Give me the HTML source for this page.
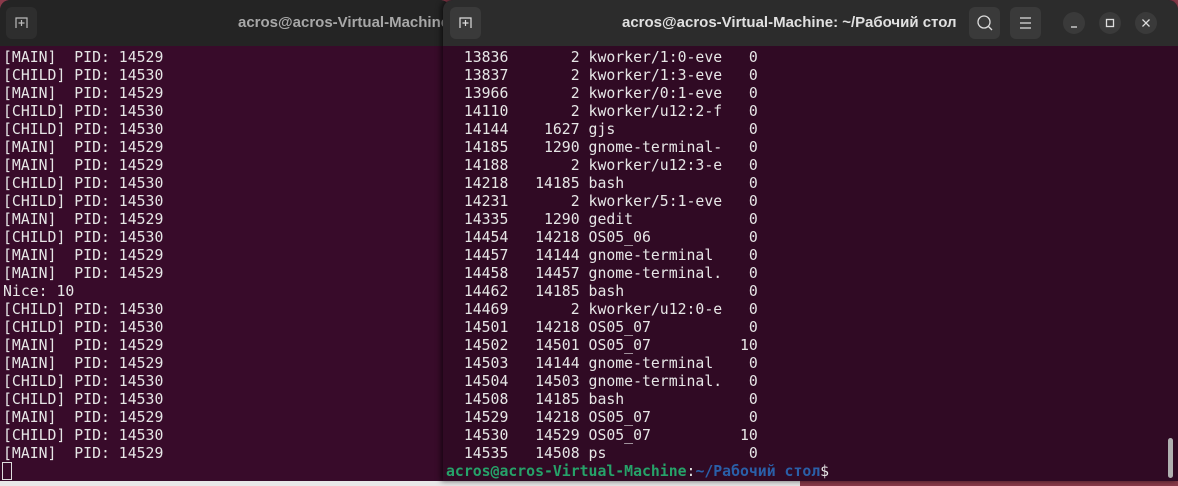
<!DOCTYPE html>
<html><head><meta charset="utf-8"><style>
*{margin:0;padding:0;box-sizing:border-box}
body{width:1178px;height:486px;overflow:hidden;background:#8a3a4a;position:relative;font-family:"DejaVu Sans Mono","Liberation Mono",monospace}
.gray{position:absolute;left:0;top:481px;width:800px;height:5px;background:#e8e8e8}
.win{position:absolute;top:0;height:481px;background:#380b2a;overflow:hidden}
.hdr{position:absolute;left:0;top:0;right:0;height:46px;font-family:"Liberation Sans","DejaVu Sans",sans-serif;font-weight:bold;font-size:15px;color:#cfcfcf}
.btn{position:absolute;top:7px;width:31px;height:32px;border-radius:6px;background:#3a3a3a}
pre{position:absolute;font-size:14.8px;line-height:18px;color:#e6e6e6;font-family:"DejaVu Sans Mono",monospace}
.circ{position:absolute;top:12px;width:22px;height:22px;border-radius:50%;background:#3a3a3a}
</style></head><body>
<div class="gray"></div>
<div class="win" style="left:0;width:450px;border-radius:10px 10px 0 0">
 <div class="hdr" style="background:#242424">
  <div class="btn" style="left:6px;background:#2e2e2e"><svg width="31" height="32"><path d="M10 21V11h11v10M15.5 13v6M12.5 16h6" stroke="#bbb" fill="none" stroke-width="1.2"/></svg></div>
  <div style="position:absolute;left:238px;top:14px;color:#a8a8a8">acros@acros-Virtual-Machine</div>
 </div>
 <pre style="left:3px;top:49px">[MAIN]  PID: 14529
[CHILD] PID: 14530
[MAIN]  PID: 14529
[CHILD] PID: 14530
[CHILD] PID: 14530
[MAIN]  PID: 14529
[MAIN]  PID: 14529
[CHILD] PID: 14530
[CHILD] PID: 14530
[MAIN]  PID: 14529
[CHILD] PID: 14530
[MAIN]  PID: 14529
[MAIN]  PID: 14529
Nice: 10
[CHILD] PID: 14530
[CHILD] PID: 14530
[MAIN]  PID: 14529
[MAIN]  PID: 14529
[CHILD] PID: 14530
[CHILD] PID: 14530
[MAIN]  PID: 14529
[CHILD] PID: 14530
[MAIN]  PID: 14529</pre>
 <div style="position:absolute;left:2px;top:462px;width:10px;height:18px;border:1px solid #ddd"></div>
</div>
<div class="win" style="left:443px;width:735px;border-radius:10px 10px 0 0;box-shadow:-2px 0 6px rgba(0,0,0,.6);background:#300a24">
 <div class="hdr" style="background:#2c2c2c">
  <div class="btn" style="left:7px"><svg width="31" height="32"><path d="M10 21V11h11v10M15.5 13v6M12.5 16h6" stroke="#ddd" fill="none" stroke-width="1.2"/></svg></div>
  <div style="position:absolute;left:179px;top:14px;color:#e0e0e0">acros@acros-Virtual-Machine: ~/Рабочий стол</div>
  <div class="btn" style="left:526px"><svg width="31" height="32"><circle cx="15" cy="15" r="6" stroke="#ddd" fill="none" stroke-width="1.3"/><path d="M19.5 19.5l3.5 3.5" stroke="#ddd" stroke-width="1.3"/></svg></div>
  <div class="btn" style="left:567px"><svg width="31" height="32"><path d="M10 11h11M10 16h11M10 21h11" stroke="#ddd" stroke-width="1.2"/></svg></div>
  <div class="circ" style="left:620px"><svg width="22" height="22"><path d="M8 15h6" stroke="#ddd" stroke-width="1.3"/></svg></div>
  <div class="circ" style="left:656px"><svg width="22" height="22"><rect x="7.5" y="7.5" width="7" height="7" stroke="#ddd" fill="none" stroke-width="1.3"/></svg></div>
  <div class="circ" style="left:692px"><svg width="22" height="22"><path d="M7.5 7.5l7 7M14.5 7.5l-7 7" stroke="#ddd" stroke-width="1.3"/></svg></div>
 </div>
 <pre style="left:3px;top:49px">  13836       2 kworker/1:0-eve   0
  13837       2 kworker/1:3-eve   0
  13966       2 kworker/0:1-eve   0
  14110       2 kworker/u12:2-f   0
  14144    1627 gjs               0
  14185    1290 gnome-terminal-   0
  14188       2 kworker/u12:3-e   0
  14218   14185 bash              0
  14231       2 kworker/5:1-eve   0
  14335    1290 gedit             0
  14454   14218 OS05_06           0
  14457   14144 gnome-terminal    0
  14458   14457 gnome-terminal.   0
  14462   14185 bash              0
  14469       2 kworker/u12:0-e   0
  14501   14218 OS05_07           0
  14502   14501 OS05_07          10
  14503   14144 gnome-terminal    0
  14504   14503 gnome-terminal.   0
  14508   14185 bash              0
  14529   14218 OS05_07           0
  14530   14529 OS05_07          10
  14535   14508 ps                0
<span style="color:#26a269;font-weight:bold">acros@acros-Virtual-Machine</span>:<span style="color:#2a5fa8;font-weight:bold">~/Рабочий стол</span>$</pre>
 <div style="position:absolute;left:725px;top:438px;width:5px;height:40px;border-radius:3px;background:#b0b0b0"></div>
</div>
</body></html>
